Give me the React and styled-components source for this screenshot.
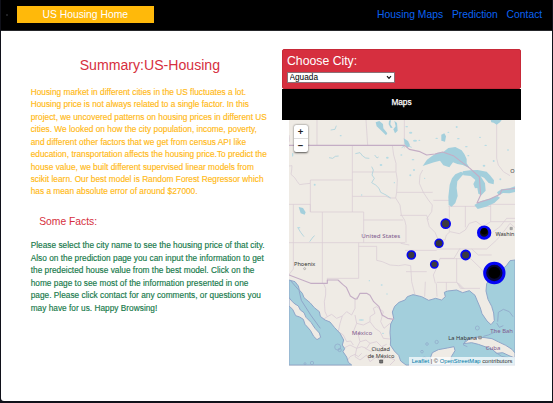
import React from "react";
import styled, { createGlobalStyle } from "styled-components";

const Global = createGlobalStyle`
  *, *::before, *::after { box-sizing: border-box; }
  body { margin: 0; background: #10111a; font-family: "Liberation Sans", Arial, sans-serif; }
`;

const Frame = styled.div`
  display: flex;
  flex-direction: column;
  width: 553px;
  height: 403px;
  padding: 0 1.5px 2px 1px;
  overflow: hidden;
  background: #10111a;
`;
const Page = styled.div`
  flex: 1;
  display: flex;
  flex-direction: column;
  background: #fff;
  border-bottom-left-radius: 3px;
`;
const Header = styled.header`
  height: 31px;
  flex: none;
  display: flex;
  align-items: center;
  padding: 0 9.3px 0 5px;
  background: #000;
  border-bottom: 1px solid #25262a;
`;
const Bullet = styled.span`
  width: 2px;
  height: 2px;
  margin-right: 9px;
  border-radius: 50%;
  background: #2b2d30;
`;
const Brand = styled.a`
  width: 136.5px;
  height: 17px;
  margin-bottom: 1px;
  line-height: 17.5px;
  font-size: 10.33px;
  text-align: center;
  color: #fff;
  background: #ffb90a;
`;
const Nav = styled.nav`
  display: flex;
  gap: 8.8px;
  margin-left: auto;
`;
const NavLink = styled.a`
  font-size: 10.33px;
  line-height: 16px;
  white-space: nowrap;
  color: #0b63f3;
`;
const Main = styled.main`
  display: flex;
  align-items: flex-start;
`;
const Summary = styled.section`
  width: 281px;
  padding: 25px 0 0 29.7px;
`;
const Title = styled.h1`
  margin: 0 0 12.7px 49px;
  font-size: 14.12px;
  font-weight: 400;
  line-height: 18px;
  color: #d62f40;
`;
const Subtitle = styled.h2`
  margin: 16px 0 12.5px 8.5px;
  font-size: 10.33px;
  font-weight: 400;
  line-height: 13px;
  color: #d62f40;
`;
const Paragraph = styled.p`
  margin: 0;
  font-size: 8.28px;
  line-height: 12.47px;
  letter-spacing: 0.023px;
  white-space: pre;
  color: ${(p) => p.$color};
  -webkit-text-stroke: 0.15px ${(p) => p.$color};
`;
const Panel = styled.section`
  width: 239px;
  margin-top: 17.5px;
`;
const CityCard = styled.div`
  height: 40.5px;
  padding: 4px 4px 0;
  background: #d62f3f;
  border: 0.5px solid #c72938;
  border-radius: 2px;
`;
const CityLabel = styled.label`
  display: block;
  font-size: 12.25px;
  line-height: 15px;
  color: #fff;
`;
const SelectBox = styled.div`
  display: grid;
  width: 107.5px;
  height: 11px;
  margin-top: 3.5px;
  background: #fff;
  border: 1px solid #8b7076;
  align-items: center;

  select, svg { grid-area: 1 / 1; }
  svg { justify-self: end; margin-right: 1.5px; pointer-events: none; }
`;
const Select = styled.select`
  appearance: none;
  width: 100%;
  height: 9px;
  padding: 0 0 0 1.5px;
  border: 0;
  background: transparent;
  font: 8.28px/9px "Liberation Sans", Arial, sans-serif;
  color: #000;
`;
const MapTitle = styled.div`
  height: 31px;
  padding-top: 7px;
  background: #000;
  color: #fff;
  font-size: 8.28px;
  line-height: 13px;
  text-align: center;
  -webkit-text-stroke: 0.25px #fff;
`;
const MapView = styled.div`
  position: relative;
  width: 226px;
  height: 245.5px;
  margin-left: 7px;
  overflow: hidden;
  background: #efebe5;
  & > svg { display: block; }
`;
const Zoom = styled.div`
  position: absolute;
  left: 4.5px;
  top: 5px;
  width: 14px;
  height: 27px;
  display: flex;
  flex-direction: column;
  background: #fff;
  border-radius: 2px;
  box-shadow: 0 0.5px 2px rgba(0, 0, 0, 0.65);
`;
const ZoomButton = styled.button`
  flex: 1;
  padding: 0;
  border: 0;
  background: none;
  font: bold 9.5px/13px "Liberation Sans", Arial, sans-serif;
  color: #222;
  & + & { border-top: 1px solid #ddd; }
`;
const Attribution = styled.div`
  position: absolute;
  right: 0;
  bottom: 0;
  width: 106px;
  height: 8.5px;
  padding-right: 2.5px;
  text-align: right;
  white-space: nowrap;
  font-size: 5.8px;
  line-height: 9px;
  color: #333;
  background: rgba(255, 255, 255, 0.7);
  a { color: #0078a8; }
`;

const summaryText = `Housing market in different cities in the US fluctuates a lot.
Housing price is not always related to a single factor. In this
project, we uncovered patterns on housing prices in different US
cities. We looked on how the city population, income, poverty,
and different other factors that we get from census API like
education, transportation affects the housing price.To predict the
house value, we built different supervised linear models from
scikit learn. Our best model is Random Forest Regressor which
has a mean absolute error of around $27000.`;

const factsText = `Please select the city name to see the housing price of that city.
Also on the prediction page you can input the information to get
the predeicted house value from the best model. Click on the
home page to see most of the information presented in one
page. Please click contact for any comments, or questions you
may have for us. Happy Browsing!`;

const LAND = "#efebe5";
const WATER = "#a3cfdc";
const COAST = "#8fa6c9";

const stateBorders = [
  "M111 15V91M258 15L263 91M27 153L36 152L35 165L33 178L44 188L52 200L59 209L72 207L91 205V195H217M217 91V291M91 205V291H251M217 171H347M217 244H318L330 249L347 249M251 291V383M251 315H370M127 291V505M40 268V383M27 268H91V291M27 383H375M40 383V462L29 476V480M236 383V490H142V504",
  "M337 91L341 120L348 145V170L352 195L350 232L347 249L360 270L364 300L374 315L378 332V383",
  "M27 82L29 75L27 60M236 394H290V436L307 440L330 450L356 452L375 449L392 452L395 500L405 540",
  "M350 232H458M360 301H440L445 315M362 385L388 390M375 406H470M378 470H440M436 500L434 545M469 505L471 545M499 502V535M470 502H530L548 522M540 400L522 430H480L472 455L460 480L466 505M535 504L553 522M530 430V500L541 520H600",
  "M428 165L420 180L418 205L430 232L445 255L457 270L455 290L441 310L448 335L465 352L475 375L495 375L499 360L510 350L538 356L556 345L568 325L588 319L610 335L632 320V268M460 256H513M508 275V350M556 273V337M505 274H632M632 268H705M632 320H705M470 402H620M480 431H572L604 462L620 487M575 402L595 420L635 420",
  "M650 15V130L655 150L670 170L690 182M373 15V100M620 402L650 375L675 345L690 325L705 338M640 350L660 335L680 310L705 310",
];
const mexicoBorders = [
  "M130 504L137 520V540L133 560L135 590L142 605L130 613M142 605L155 598L170 610L187 603L180 625L175 650L190 660L200 680M187 603L200 590L215 600L225 580V555L232 545M225 600L230 625L250 630L270 620L270 605L285 595L280 580L290 575M270 620L285 640L300 650L310 670L330 672M230 625L220 650L235 660L240 680L230 700L210 690L190 700M240 680L258 675L270 685L260 700L245 695L230 700L225 725L240 735L260 720L270 740L290 725L300 740M270 685L290 680L305 695L320 688M300 740L320 725L345 735L330 750M200 680L212 678L220 690M245 715L235 725L225 718L210 725L200 740M255 700L275 710L285 700L298 710L315 705",
  "M290 575L310 590L302 620L312 640L330 625M27 570H55L65 575",
];
const nationBorders = [
  "M27 91H374L388 103L420 110L440 120L465 117L488 111L520 122L550 145L570 160L598 186L602 240L591 264L630 252L660 238L665 225L705 220",
  "M27 480L92 505H142V495H174L188 508L199 517L211 543L225 552H231L240 535H260L270 541L281 560L297 575L306 600L323 610L342 613",
];
const waterAreas = [
  "M27 495L45 500L55 513L58 525L67 535L72 548L90 563L103 578L118 590L121 604L135 615L150 621L164 638L180 655L191 675L187 690L194 701L189 710L200 726L205 742L215 750H27Z",
  "M375 555L357 562L344 574L337 591L341 610L332 627L330 653L332 675L331 690L343 708L356 721L362 738L378 750H705V435L690 437L680 451L665 465L641 476L629 493L620 506L618 528L624 553L635 574L641 594L643 617L633 629L621 618L606 596L601 579L592 558L585 541L568 527L548 533L530 525L503 528L493 532L496 545L485 555L467 550L446 556L425 545L399 539L382 545Z",
];
const islands = [
  "M27 548L37 560L45 567L55 573L61 585L72 593L78 607L93 622L105 640L118 654L122 667L111 674L101 664L91 646L75 628L70 613L59 606L47 602L38 583L27 573Z",
  "M450 750L452 726L457 713L475 704L502 699L522 695L525 707L514 725L511 750Z",
  "M550 686L565 674L588 666L615 668L636 671L656 681L677 691L696 703L705 714V729L687 722L668 713L650 715L637 703L618 696L595 688L575 683Z",
];
const lakes = [
  "M428 153L441 134L456 123L472 113L490 111L505 99L526 96L545 106L553 117L560 132V145L569 159L548 150L532 147L519 142L508 157L490 151L480 137L462 142Z",
  "M509 209L516 190L526 178L543 170L553 175L543 186L532 199L530 219L533 243L526 264L515 275L506 270L505 246Z",
  "M548 169L570 166L593 165L620 170L630 181L642 196L641 208L626 204L612 188L602 184L615 205L617 227L604 241L595 236L592 219L585 220L580 207L586 195L572 183L550 181Z",
  "M583 270L603 258L625 252L652 243L660 248L643 264L618 275L593 282Z",
  "M651 232L664 223L688 220L705 214V231L688 235L669 234L656 241Z",
  "M287 22L298 18L309 27L310 40L322 55L318 61L305 48L290 34Z",
  "M327 17L333 15L331 28L338 38L332 39L326 28ZM343 17L351 24L353 47L345 55L340 43L347 34Z",
  "M56 276L69 279L77 292L74 299L62 295Z",
  "M484 59L493 55L498 64L495 80L484 77Z",
  "M632 15H665L660 22L650 29L641 23L634 22Z",
  "M371 70L384 78L390 91L382 99L374 86Z",
];
const ponds = [
  [38, 119, 2, 6], [104, 209, 3, 3], [182, 62, 3, 2], [57, 338, 4, 2], [303, 150, 4, 3], [364, 120, 3, 2],
  [322, 128, 4, 3], [245, 240, 2, 2], [343, 203, 2, 2], [380, 35, 4, 2], [392, 53, 5, 3], [405, 77, 6, 3],
  [399, 134, 4, 2], [418, 76, 3, 2], [470, 70, 4, 2], [505, 52, 3, 2], [535, 71, 4, 2], [559, 95, 4, 2],
  [530, 36, 3, 3], [600, 67, 3, 2], [617, 91, 4, 2], [565, 122, 3, 2], [641, 138, 3, 3], [612, 152, 4, 3],
  [661, 193, 3, 3], [684, 105, 3, 2], [391, 181, 3, 3], [402, 165, 3, 3], [434, 190, 2, 2], [244, 615, 8, 2],
  [309, 655, 3, 2], [268, 497, 2, 2], [305, 510, 3, 2], [321, 537, 2, 2],
];
const streams = [
  "M147 128L158 130L166 124L176 123M226 116L240 113L248 123L257 129L268 130M275 155L280 165L276 180L283 190L275 203L287 210L297 220L302 232L318 240L332 249M89 380L99 366L104 362M53 337L62 352L72 365M152 45L165 43L169 32M284 120L291 129L296 126",
  "M365 98L377 90L395 97",
];
const keys = [
  [173, 696, 9], [179, 705, 5], [75, 746, 3], [96, 744, 5], [441, 687, 4], [470, 681, 5], [426, 710, 4], [433, 732, 6], [592, 639, 6], [427, 741, 3],
];
const markers = [
  { x: 497, y: 326, r: 13.5, w: 5, fill: "#3b3a3f" },
  { x: 477, y: 385, r: 12, w: 4.5, fill: "#35343a" },
  { x: 394, y: 420, r: 12, w: 5, fill: "#3b3a3f" },
  { x: 463, y: 448, r: 11, w: 4.5, fill: "#3b3a3f" },
  { x: 557, y: 420, r: 13.5, w: 5.5, fill: "#3b3a3f" },
  { x: 612.5, y: 353, r: 17, w: 9, fill: "#101018", core: 10, dy: -4 },
  { x: 643, y: 474, r: 29, w: 9, fill: "#08083a", core: 18, dy: -1 },
];
const labels = [
  { t: "United States", x: 302, y: 370, s: 18, c: "#805b8e", w: 117 },
  { t: "México", x: 246, y: 660, s: 18.2, c: "#805b8e", w: 61 },
  { t: "Cuba", x: 639, y: 704, s: 18, c: "#805b8e", w: 44 },
  { t: "Phoenix", x: 74, y: 453, s: 17.2, c: "#333", w: 64 },
  { t: "Ciudad", x: 302, y: 708, s: 17.2, c: "#333", w: 55 },
  { t: "de México", x: 303, y: 728, s: 17, c: "#333", w: 80 },
  { t: "La Habana", x: 548, y: 674, s: 17.2, c: "#333", w: 86 },
  { t: "Washin", x: 675, y: 363, s: 16.8, c: "#333", w: 57 },
  { t: "O", x: 697, y: 175, s: 17, c: "#333", w: 13 },
  { t: "The Bah", x: 665, y: 654, s: 17.5, c: "#805b8e", w: 68 },
];

const Lines = ({ paths, ...rest }) => paths.map((d) => <path key={d} d={d} {...rest} />);

function CityMap() {
  return (
    <svg width="226" height="245.5" viewBox="27 15 678 736.5" preserveAspectRatio="none" fill="none" strokeLinejoin="round">
      <Lines paths={stateBorders} stroke="#d9ccd5" strokeWidth="2.2" />
      <Lines paths={mexicoBorders} stroke="#d9ccd5" strokeWidth="2.4" />
      <Lines paths={streams} stroke="#a3cfdc" strokeWidth="2.2" />
      <Lines paths={waterAreas} fill={WATER} stroke={COAST} strokeWidth="3" />
      <path d="M30 495L57 526L64 556L92 600L121 640" stroke={COAST} strokeWidth="3" />
      <Lines paths={islands} fill={LAND} stroke={COAST} strokeWidth="3" />
      <path d="M653 620L655 592L670 583L688 590L699 605M650 624L658 637L670 632M648 650L625 660L610 664M557 675L550 690L562 695M645 711L665 724L685 728" stroke={COAST} strokeWidth="2.5" />
      <Lines paths={lakes} fill={WATER} />
      {ponds.map(([x, y, rx, ry]) => (
        <ellipse key={`${x}-${y}`} cx={x} cy={y} rx={rx} ry={ry} fill="#b5dbe4" />
      ))}
      {keys.map(([x, y, r]) => (
        <circle key={`${x}-${y}`} cx={x} cy={y} r={r} stroke={COAST} strokeWidth="2" />
      ))}
      <Lines paths={nationBorders} stroke="#c4adc5" strokeWidth="3.4" />
      <circle cx="74" cy="461" r="3" stroke="#888" strokeWidth="1.5" />
      <rect x="299" y="735" width="9" height="9" fill="#777" stroke="#444" strokeWidth="2" />
      <rect x="596" y="664" width="8" height="8" fill="#aaa" stroke="#777" strokeWidth="1.5" />
      <rect x="690" y="337" width="7" height="7" fill="#aaa" stroke="#888" strokeWidth="1.5" />
      <g fontFamily="Noto Sans, sans-serif">
        {labels.map((l) => (
          <text
            key={l.t}
            x={l.x}
            y={l.y}
            fontSize={l.s}
            fill={l.c}
            textAnchor="middle"
            textLength={l.w}
            lengthAdjust="spacingAndGlyphs"
          >
            {l.t}
          </text>
        ))}
      </g>
      {markers.map((m) => (
        <g key={`${m.x}-${m.y}`}>
          <circle cx={m.x} cy={m.y} r={m.r} fill={m.fill} stroke="#0505f5" strokeWidth={m.w} />
          {m.core && <circle cx={m.x} cy={m.y + m.dy} r={m.core} fill="#000" />}
        </g>
      ))}
    </svg>
  );
}

export default function App() {
  return (
    <Frame>
      <Global />
      <Page>
        <Header>
          <Bullet />
          <Brand>US Housing Home</Brand>
          <Nav>
            <NavLink>Housing Maps</NavLink>
            <NavLink>Prediction</NavLink>
            <NavLink>Contact</NavLink>
          </Nav>
        </Header>
        <Main>
          <Summary>
            <Title>Summary:US-Housing</Title>
            <Paragraph $color="#ffb914">{summaryText}</Paragraph>
            <Subtitle>Some Facts:</Subtitle>
            <Paragraph $color="#16794a">{factsText}</Paragraph>
          </Summary>
          <Panel>
            <CityCard>
              <CityLabel htmlFor="city">Choose City:</CityLabel>
              <SelectBox>
                <Select id="city" defaultValue="Aguada">
                  <option>Aguada</option>
                </Select>
                <svg width="6" height="5" viewBox="0 0 6 5">
                  <path d="M1 1.2L3 3.4L5 1.2" fill="none" stroke="#111" strokeWidth="1.2" />
                </svg>
              </SelectBox>
            </CityCard>
            <MapTitle>Maps</MapTitle>
            <MapView>
              <CityMap />
              <Zoom>
                <ZoomButton>+</ZoomButton>
                <ZoomButton>−</ZoomButton>
              </Zoom>
              <Attribution>
                <a>Leaflet</a> | © <a>OpenStreetMap</a> contributors
              </Attribution>
            </MapView>
          </Panel>
        </Main>
      </Page>
    </Frame>
  );
}
